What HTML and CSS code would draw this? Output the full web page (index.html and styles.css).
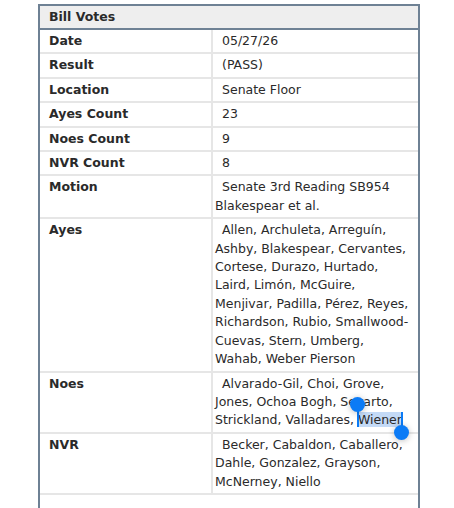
FILE: index.html
```html
<!DOCTYPE html>
<html lang="en">
<head>
<meta charset="utf-8">
<title>Bill Votes</title>
<link rel="stylesheet" href="styles.css">
</head>
<body>
<div class="panel">
  <div class="panel-head">Bill Votes</div>
  <div class="rows">
    <div class="row"><div class="label">Date</div><div class="value">05/27/26</div></div>
    <div class="row"><div class="label">Result</div><div class="value">(PASS)</div></div>
    <div class="row"><div class="label">Location</div><div class="value">Senate Floor</div></div>
    <div class="row"><div class="label">Ayes Count</div><div class="value">23</div></div>
    <div class="row"><div class="label">Noes Count</div><div class="value">9</div></div>
    <div class="row"><div class="label">NVR Count</div><div class="value">8</div></div>
    <div class="row"><div class="label">Motion</div><div class="value">Senate 3rd Reading SB954 Blakespear et al.</div></div>
    <div class="row"><div class="label">Ayes</div><div class="value">Allen, Archuleta, Arreguín, Ashby, Blakespear, Cervantes, Cortese, Durazo, Hurtado, Laird, Limón, McGuire, Menjivar, Padilla, Pérez, Reyes, Richardson, Rubio, Smallwood-Cuevas, Stern, Umberg, Wahab, Weber Pierson</div></div>
    <div class="row"><div class="label">Noes</div><div class="value">Alvarado-Gil, Choi, Grove, Jones, Ochoa Bogh, Seyarto, Strickland, Valladares, <span class="sel">Wiener<span class="handle handle-start"></span><span class="handle handle-end"></span></span></div></div>
    <div class="row"><div class="label">NVR</div><div class="value">Becker, Cabaldon, Caballero, Dahle, Gonzalez, Grayson, McNerney, Niello</div></div>
  </div>
</div>
</body>
</html>
```

FILE: styles.css
```css
html, body {
  margin: 0;
  padding: 0;
  background: #ffffff;
}

body {
  font-family: "DejaVu Sans", Verdana, sans-serif;
  font-size: 12.5px;
  color: #2a2a2a;
  overflow: hidden;
}

.panel {
  width: 378px;
  margin: 4px 0 0 38px;
  border: 2px solid #6e8194;
  padding-bottom: 40px;
}

.panel-head {
  height: 22px;
  line-height: 22px;
  padding-left: 9px;
  background: #eeeeee;
  border-bottom: 2px solid #6e8194;
  font-weight: bold;
}

.row {
  display: grid;
  grid-template-columns: 173px 1fr;
  border-bottom: 2px solid #e6e6e6;
  line-height: 18.4px;
}

.label {
  padding: 2px 4px 2px 9px;
  border-right: 2px solid #e6e6e6;
  font-weight: bold;
}

.value {
  padding: 2px 6px 2px 2px;
  text-indent: 7px;
}

.sel {
  position: relative;
  background: #c4daf6;
}

.handle {
  position: absolute;
  width: 2px;
  background: #0b7bf6;
}

.handle::before {
  content: "";
  position: absolute;
  width: 15px;
  height: 15px;
  border-radius: 50%;
  background: #0b7bf6;
  left: -6.5px;
  box-shadow: 0 1px 6px rgba(0, 0, 0, 0.25);
}

.handle-start {
  left: -1px;
  top: -8px;
  bottom: 0;
}

.handle-start::before {
  top: -7px;
}

.handle-end {
  right: -1px;
  top: 0;
  bottom: -6px;
}

.handle-end::before {
  bottom: -7px;
}
```
